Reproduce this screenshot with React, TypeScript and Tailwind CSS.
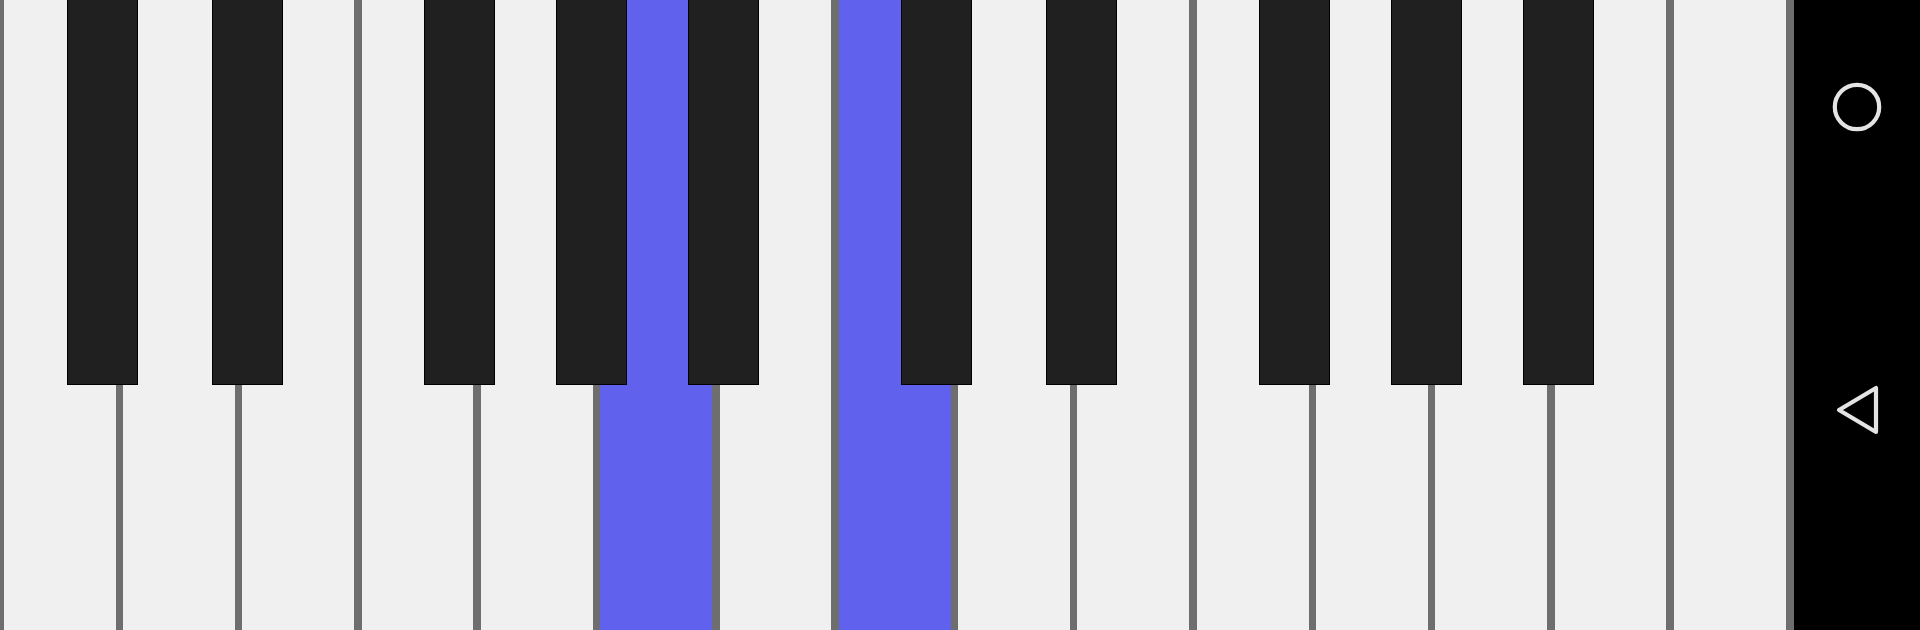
import React from "react";

const whiteKeys = [
  false, false, false, false, false, true, false, true,
  false, false, false, false, false, false, false,
];

const blackKeyClasses = [
  "left-[67px]",
  "left-[212px]",
  "left-[424px]",
  "left-[556px]",
  "left-[688px]",
  "left-[901px]",
  "left-[1046px]",
  "left-[1259px]",
  "left-[1391px]",
  "left-[1523px]",
];

export default function App() {
  return (
    <div className="flex h-[630px] w-[1920px] overflow-hidden bg-black">
      <div className="relative flex h-full w-[1794px] shrink-0 gap-[7.5px] bg-[#6e6e6e] pl-[3.75px] pr-[8.35px]">
        {whiteKeys.map((on, i) => (
          <div
            key={i}
            className={on ? "h-full flex-1 bg-[#6062ee]" : "h-full flex-1 bg-[#f0f0f0]"}
          />
        ))}
        {blackKeyClasses.map((c, i) => (
          <div
            key={i}
            className={
              "absolute top-0 h-[385px] w-[71px] border border-t-0 border-black bg-[#202020] " + c
            }
          />
        ))}
      </div>
      <div className="flex flex-1 flex-col items-center bg-black pt-[81px]">
        <svg width="52" height="52" viewBox="0 0 52 52" fill="none">
          <circle cx="26" cy="26" r="22.2" stroke="#e4e4e4" strokeWidth="4.2" />
        </svg>
        <svg className="mt-[251px]" width="52" height="52" viewBox="0 0 52 52" fill="none">
          <polygon
            points="8,26 45,4 45,48"
            stroke="#e4e4e4"
            strokeWidth="4.2"
            strokeLinejoin="round"
          />
        </svg>
      </div>
    </div>
  );
}
